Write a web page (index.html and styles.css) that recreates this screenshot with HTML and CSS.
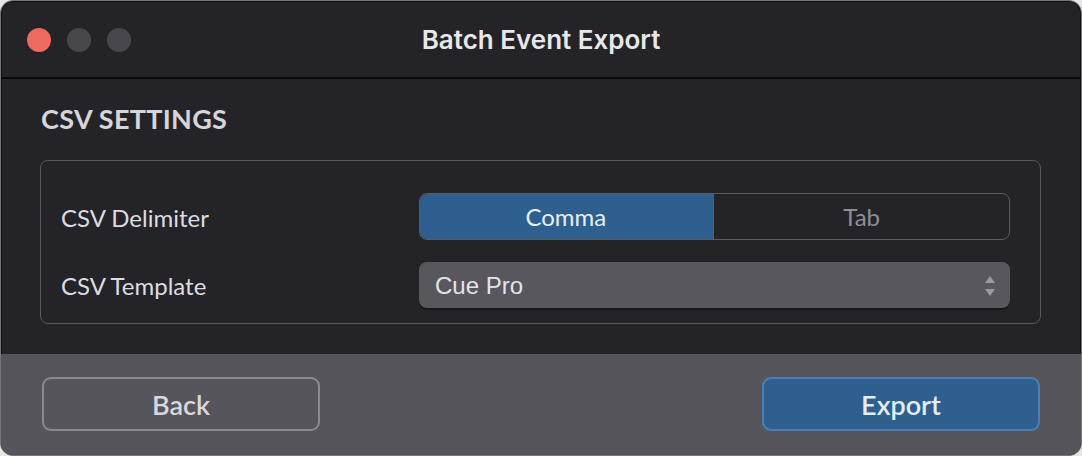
FILE: index.html
```html
<!DOCTYPE html>
<html lang="en">
<head>
    <title>Batch Event Export</title>
    <link rel="stylesheet" href="styles.css">
</head>
<body>
    <div class="window">
        <!-- Title bar -->
        <div class="titlebar">
            <div class="lights">
                <span class="light close"></span>
                <span class="light"></span>
                <span class="light"></span>
            </div>
            <div class="title">Batch Event Export</div>
        </div>

        <div class="content">
            <h2 class="section-title">CSV SETTINGS</h2>
            <div class="group">
                <div class="row">
                    <div class="label">CSV Delimiter</div>
                    <div class="segmented">
                        <div class="segment active">Comma</div>
                        <div class="segment">Tab</div>
                    </div>
                </div>
                <div class="row">
                    <div class="label">CSV Template</div>
                    <div class="select">
                        <span>Cue Pro</span>
                        <svg class="stepper" width="12" height="24" viewBox="0 0 12 24">
                            <path d="M6 2 L11 9 L1 9 Z" fill="#9a9aa0"/>
                            <path d="M1 15 L11 15 L6 22 Z" fill="#9a9aa0"/>
                        </svg>
                    </div>
                </div>
            </div>
        </div>

        <div class="footer">
            <button class="btn">Back</button>
            <button class="btn primary">Export</button>
        </div>
    </div>
</body>
</html>
```

FILE: styles.css
```css
html {
    background: #e6e6e8;
}
body {
    margin: 0;
    width: 1082px;
    height: 456px;
    font-family: Lato, "Noto Sans", sans-serif;
}
.window {
    box-sizing: border-box;
    height: 456px;
    display: flex;
    flex-direction: column;
    border: 1px solid #77777b;
    border-radius: 13px;
    overflow: hidden;
    background: #242328;
    box-shadow: inset 0 0 0 1px #0e0e10;
}
.titlebar {
    position: relative;
    height: 76px;
    flex: none;
    display: flex;
    align-items: center;
    justify-content: center;
    border-bottom: 2px solid #08080a;
}
.lights {
    position: absolute;
    left: 26px;
    top: 27px;
    display: flex;
    gap: 16px;
}
.light {
    width: 24px;
    height: 24px;
    border-radius: 50%;
    background: #48474d;
}
.light.close {
    background: #ec6a5f;
}
.title {
    font-family: Inter, sans-serif;
    font-weight: 600;
    font-size: 26px;
    color: #e8e8ea;
    margin-top: 1px;
}
.content {
    flex: 1;
    padding: 0 40px 0 39px;
}
.section-title {
    margin: 22px 0 0 1px;
    font-size: 27px;
    font-weight: 700;
    color: #d6d6da;
    letter-spacing: 0.3px;
    line-height: 36px;
}
.group {
    margin-top: 23px;
    height: 164px;
    box-sizing: border-box;
    border: 1.5px solid #58585d;
    border-radius: 8px;
    padding: 32px 30px 0 20px;
    display: flex;
    flex-direction: column;
    gap: 21px;
}
.row {
    display: flex;
    align-items: center;
    justify-content: space-between;
    height: 47px;
}
.label {
    font-size: 24px;
    color: #dcdce0;
    margin-top: 2px;
}
.segmented {
    width: 591px;
    height: 47px;
    box-sizing: border-box;
    display: flex;
    border: 1.5px solid #5c5c61;
    border-radius: 8px;
    overflow: hidden;
}
.segment {
    flex: 1;
    display: flex;
    align-items: center;
    justify-content: center;
    font-size: 24px;
    color: #8e8e94;
}
.segment.active {
    background: #2e5f8e;
    color: #e6eef6;
    border-right: 1.5px solid #5c5c61;
    margin: -1.5px 0 -1.5px -1.5px;
}
.select {
    width: 591px;
    height: 46px;
    box-sizing: border-box;
    display: flex;
    align-items: center;
    justify-content: space-between;
    padding: 0 14px 0 16px;
    background: #57575d;
    border-radius: 8px;
    box-shadow: 0 2px 0 #18181b;
    font-family: "Liberation Sans", Arial, sans-serif;
    font-size: 24px;
    color: #e4e4e8;
}
.select span {
    margin-top: 2px;
}
.stepper {
    margin-top: 2px;
}
.footer {
    flex: none;
    height: 101px;
    box-sizing: border-box;
    background: #55555b;
    display: flex;
    justify-content: space-between;
    align-items: flex-start;
    padding: 23px 41px 0 41px;
}
.btn {
    width: 278px;
    height: 54px;
    box-sizing: border-box;
    border: 2px solid #8a8a90;
    border-radius: 9px;
    background: transparent;
    font-family: Lato, "Noto Sans", sans-serif;
    font-size: 27px;
    font-weight: 600;
    color: #d8d8dc;
    padding-top: 2px;
}
.btn.primary {
    background: #2e5f8e;
    border-color: #4a80b6;
    color: #e4ecf4;
}
```
